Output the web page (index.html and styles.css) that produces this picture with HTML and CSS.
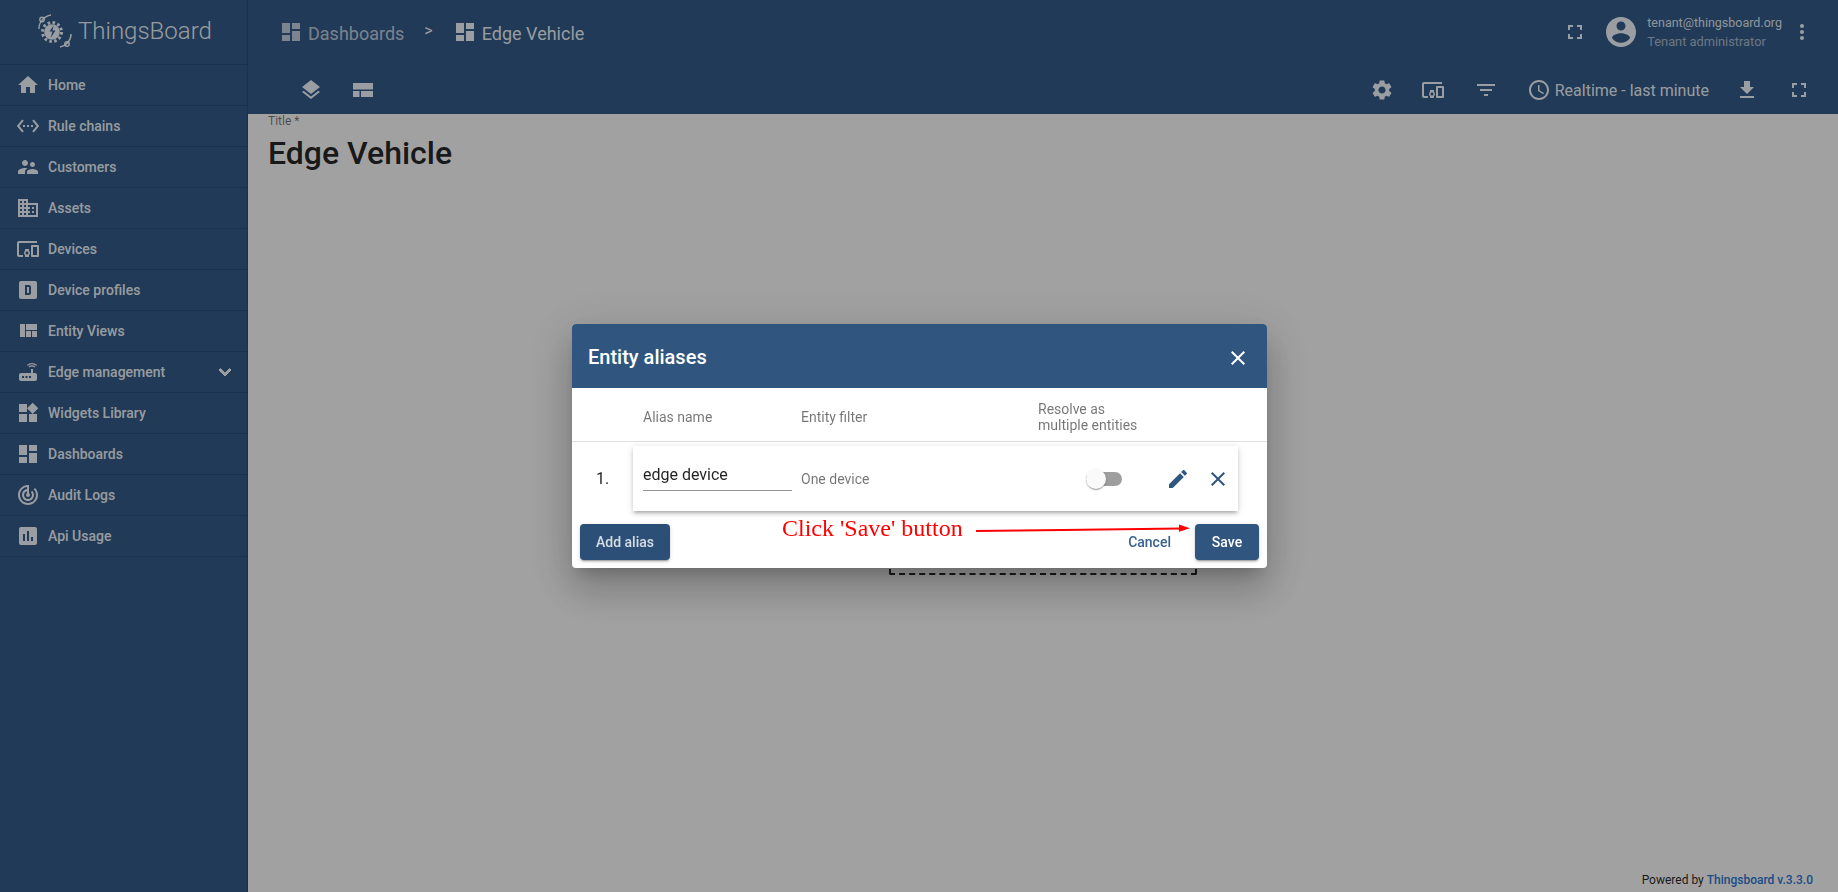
FILE: index.html
```html
<!DOCTYPE html>
<html lang="en">
<head>
<meta charset="utf-8">
<title>ThingsBoard</title>
<link rel="stylesheet" href="styles.css">
</head>
<body>
<svg class="defs" aria-hidden="true">
  <symbol id="i-home" viewBox="0 0 24 24"><path d="M10 20v-6h4v6h5v-8h3L12 3 2 12h3v8z"/></symbol>
  <symbol id="i-rule" viewBox="0 0 24 24"><path d="M7.77 6.76L6.23 5.48.82 12l5.41 6.52 1.54-1.28L3.42 12l4.35-5.24zM7 13h2v-2H7v2zm10-2h-2v2h2v-2zm-6 2h2v-2h-2v2zm6.77-7.52l-1.54 1.28L20.58 12l-4.35 5.24 1.54 1.28L23.18 12l-5.41-6.52z"/></symbol>
  <symbol id="i-customers" viewBox="0 0 24 24"><path d="M16.5 12c1.38 0 2.49-1.12 2.49-2.5S17.88 7 16.5 7C15.12 7 14 8.12 14 9.5s1.12 2.5 2.5 2.5zM9 11c1.66 0 2.99-1.34 2.99-3S10.66 5 9 5C7.34 5 6 6.34 6 8s1.34 3 3 3zm7.5 3c-1.83 0-5.5.92-5.5 2.75V19h11v-2.25c0-1.83-3.67-2.75-5.5-2.75zM9 13c-2.33 0-7 1.17-7 3.5V19h7v-2.25c0-.85.33-2.34 2.37-3.47C10.5 13.1 9.66 13 9 13z"/></symbol>
  <symbol id="i-domain" viewBox="0 0 24 24"><path d="M12 7V3H2v18h20V7H12zM6 19H4v-2h2v2zm0-4H4v-2h2v2zm0-4H4V9h2v2zm0-4H4V5h2v2zm4 12H8v-2h2v2zm0-4H8v-2h2v2zm0-4H8V9h2v2zm0-4H8V5h2v2zm10 12h-8v-2h2v-2h-2v-2h2v-2h-2V9h8v10zm-2-8h-2v2h2v-2zm0 4h-2v2h2v-2z"/></symbol>
  <symbol id="i-devices" viewBox="0 0 24 24"><path d="M3 6h18V4H3c-1.1 0-2 .9-2 2v12c0 1.1.9 2 2 2h4v-2H3V6zm10 6H9v1.78c-.61.55-1 1.33-1 2.22s.39 1.67 1 2.22V20h4v-1.78c.61-.55 1-1.34 1-2.22s-.39-1.67-1-2.22V12zm-2 5.5c-.83 0-1.5-.67-1.5-1.5s.67-1.5 1.5-1.5 1.5.67 1.5 1.5-.67 1.5-1.5 1.5zM22 8h-6c-.5 0-1 .5-1 1v10c0 .5.5 1 1 1h6c.5 0 1-.5 1-1V9c0-.5-.5-1-1-1zm-1 10h-4v-8h4v8z"/></symbol>
  <symbol id="i-profile" viewBox="0 0 24 24"><path fill-rule="evenodd" d="M5 3h14a2 2 0 0 1 2 2v14a2 2 0 0 1-2 2H5a2 2 0 0 1-2-2V5a2 2 0 0 1 2-2zm4 4v10h4a2 2 0 0 0 2-2V9a2 2 0 0 0-2-2H9zm2 2h2v6h-2V9z"/></symbol>
  <symbol id="i-quilt" viewBox="0 0 24 24"><path d="M10 18h5v-6h-5v6zm-6 0h5V5H4v13zm12 0h5v-6h-5v6zM10 5v6h11V5H10z"/></symbol>
  <symbol id="i-router" viewBox="0 0 24 24"><path d="M20.2 5.9l.8-.8C19.6 3.7 17.8 3 16 3s-3.6.7-5 2.1l.8.8C13 4.8 14.5 4.2 16 4.2s3 .6 4.2 1.7zm-.9.8c-.9-.9-2.1-1.4-3.3-1.4s-2.4.5-3.3 1.4l.8.8c.7-.7 1.6-1 2.5-1 .9 0 1.8.3 2.5 1l.8-.8zM19 13h-2V9h-2v4H5c-1.1 0-2 .9-2 2v4c0 1.1.9 2 2 2h14c1.1 0 2-.9 2-2v-4c0-1.1-.9-2-2-2zM8 18H6v-2h2v2zm3.5 0h-2v-2h2v2zm3.5 0h-2v-2h2v2z"/></symbol>
  <symbol id="i-widgets" viewBox="0 0 24 24"><path d="M13 13v8h8v-8h-8zM3 21h8v-8H3v8zM3 3v8h8V3H3zm13.66-1.31L11 7.34 16.66 13l5.66-5.66-5.66-5.65z"/></symbol>
  <symbol id="i-dashboard" viewBox="0 0 24 24"><path d="M3 13h8V3H3v10zm0 8h8v-6H3v6zm10 0h8V11h-8v10zm0-18v6h8V3h-8z"/></symbol>
  <symbol id="i-audit" viewBox="0 0 24 24"><path d="M19.07 4.93l-1.41 1.41C19.1 7.79 20 9.79 20 12c0 4.42-3.58 8-8 8s-8-3.58-8-8c0-4.08 3.05-7.44 7-7.93v2.02C8.16 6.57 6 9.03 6 12c0 3.31 2.69 6 6 6s6-2.69 6-6c0-1.66-.67-3.16-1.76-4.24l-1.41 1.41C15.55 9.9 16 10.9 16 12c0 2.21-1.79 4-4 4s-4-1.79-4-4c0-1.86 1.28-3.41 3-3.86v2.14c-.6.35-1 .98-1 1.72 0 1.1.9 2 2 2s2-.9 2-2c0-.74-.4-1.38-1-1.72V2h-1C6.48 2 2 6.48 2 12s4.48 10 10 10 10-4.48 10-10c0-2.76-1.12-5.26-2.93-7.07z"/></symbol>
  <symbol id="i-chart" viewBox="0 0 24 24"><path d="M19 3H5c-1.1 0-2 .9-2 2v14c0 1.1.9 2 2 2h14c1.1 0 2-.9 2-2V5c0-1.1-.9-2-2-2zM9 17H7v-7h2v7zm4 0h-2V7h2v10zm4 0h-2v-4h2v4z"/></symbol>
  <symbol id="i-expand" viewBox="0 0 24 24"><path d="M16.59 8.59L12 13.17 7.41 8.59 6 10l6 6 6-6z"/></symbol>
  <symbol id="i-layers" viewBox="0 0 24 24"><path d="M11.99 18.54l-7.37-5.73L3 14.07l9 7 9-7-1.63-1.27-7.38 5.74zM12 16l7.36-5.73L21 9l-9-7-9 7 1.63 1.27L12 16z"/></symbol>
  <symbol id="i-layout" viewBox="0 0 24 24"><path d="M2 5h20v6.5H2zM2 13h6.5v6H2zM10 13h12v6H10z"/></symbol>
  <symbol id="i-settings" viewBox="0 0 24 24"><path d="M19.14 12.94c.04-.3.06-.61.06-.94 0-.32-.02-.64-.07-.94l2.03-1.58c.18-.14.23-.41.12-.61l-1.92-3.32c-.12-.22-.37-.29-.59-.22l-2.39.96c-.5-.38-1.03-.7-1.62-.94l-.36-2.54c-.04-.24-.24-.41-.48-.41h-3.84c-.24 0-.43.17-.47.41l-.36 2.54c-.59.24-1.13.57-1.62.94l-2.39-.96c-.22-.08-.47 0-.59.22L2.74 8.87c-.12.21-.08.47.12.61l2.03 1.58c-.05.3-.09.63-.09.94s.02.64.07.94l-2.03 1.58c-.18.14-.23.41-.12.61l1.92 3.32c.12.22.37.29.59.22l2.39-.96c.5.38 1.03.7 1.62.94l.36 2.54c.05.24.24.41.48.41h3.84c.24 0 .44-.17.47-.41l.36-2.54c.59-.24 1.13-.56 1.62-.94l2.39.96c.22.08.47 0 .59-.22l1.92-3.32c.12-.22.07-.47-.12-.61l-2.01-1.58zM12 15.6c-1.98 0-3.6-1.62-3.6-3.6s1.62-3.6 3.6-3.6 3.6 1.62 3.6 3.6-1.62 3.6-3.6 3.6z"/></symbol>
  <symbol id="i-filter" viewBox="0 0 24 24"><path d="M10 18h4v-2h-4v2zM3 6v2h18V6H3zm3 7h12v-2H6v2z"/></symbol>
  <symbol id="i-clock" viewBox="0 0 24 24"><path d="M11.99 2C6.47 2 2 6.48 2 12s4.47 10 9.99 10C17.52 22 22 17.52 22 12S17.52 2 11.99 2zM12 20c-4.42 0-8-3.58-8-8s3.58-8 8-8 8 3.58 8 8-3.58 8-8 8zm.5-13H11v6l5.25 3.15.75-1.23-4.5-2.67z"/></symbol>
  <symbol id="i-download" viewBox="0 0 24 24"><path d="M19 9h-4V3H9v6H5l7 7 7-7zM5 18v2h14v-2H5z"/></symbol>
  <symbol id="i-fullscreen" viewBox="0 0 24 24"><path d="M7 14H5v5h5v-2H7v-3zm-2-4h2V7h3V5H5v5zm12 7h-3v2h5v-5h-2v3zM14 5v2h3v3h2V5h-5z"/></symbol>
  <symbol id="i-account" viewBox="0 0 24 24"><path d="M12 2C6.48 2 2 6.48 2 12s4.48 10 10 10 10-4.48 10-10S17.52 2 12 2zm0 3c1.66 0 3 1.34 3 3s-1.34 3-3 3-3-1.34-3-3 1.34-3 3-3zm0 14.2c-2.5 0-4.71-1.28-6-3.22.03-1.99 4-3.08 6-3.08 1.99 0 5.97 1.09 6 3.08-1.29 1.94-3.5 3.22-6 3.22z"/></symbol>
  <symbol id="i-more" viewBox="0 0 24 24"><path d="M12 8c1.1 0 2-.9 2-2s-.9-2-2-2-2 .9-2 2 .9 2 2 2zm0 2c-1.1 0-2 .9-2 2s.9 2 2 2 2-.9 2-2-.9-2-2-2zm0 6c-1.1 0-2 .9-2 2s.9 2 2 2 2-.9 2-2-.9-2-2-2z"/></symbol>
  <symbol id="i-edit" viewBox="0 0 24 24"><path d="M3 17.25V21h3.75L17.81 9.94l-3.75-3.75L3 17.25zM20.71 7.04c.39-.39.39-1.02 0-1.41l-2.34-2.34c-.39-.39-1.02-.39-1.41 0l-1.83 1.83 3.75 3.75 1.83-1.83z"/></symbol>
  <symbol id="i-close" viewBox="0 0 24 24"><path d="M19 6.41L17.59 5 12 10.59 6.41 5 5 6.41 10.59 12 5 17.59 6.41 19 12 13.41 17.59 19 19 17.59 13.41 12z"/></symbol>
</svg>

<div class="app">
  <aside class="sidebar">
    <div class="brand">
      <svg class="brand-mark" viewBox="0 0 36 36" aria-hidden="true">
        <circle class="gear-teeth" cx="15" cy="18" r="9.5"/>
        <circle class="gear-body" cx="15" cy="18" r="7.8"/>
        <path class="gear-bolt" d="M16.5 11.5l-4 6h3l-2 6.5 5-7.5h-3z"/>
        <path class="orbit" d="M2 15C1.5 9 7 2 14 1M23 33c6-1 11-6 11-13"/>
        <circle class="orbit" cx="5" cy="5.5" r="2.2"/>
        <circle class="orbit" cx="30" cy="30" r="2.2"/>
      </svg>
      <span class="brand-name">ThingsBoard</span>
    </div>
    <nav class="nav">
      <a class="nav-item"><svg class="icon"><use href="#i-home"/></svg><span>Home</span></a>
      <a class="nav-item"><svg class="icon"><use href="#i-rule"/></svg><span>Rule chains</span></a>
      <a class="nav-item"><svg class="icon"><use href="#i-customers"/></svg><span>Customers</span></a>
      <a class="nav-item"><svg class="icon"><use href="#i-domain"/></svg><span>Assets</span></a>
      <a class="nav-item"><svg class="icon"><use href="#i-devices"/></svg><span>Devices</span></a>
      <a class="nav-item"><svg class="icon"><use href="#i-profile"/></svg><span>Device profiles</span></a>
      <a class="nav-item"><svg class="icon"><use href="#i-quilt"/></svg><span>Entity Views</span></a>
      <a class="nav-item"><svg class="icon"><use href="#i-router"/></svg><span>Edge management</span><svg class="icon nav-chevron"><use href="#i-expand"/></svg></a>
      <a class="nav-item"><svg class="icon"><use href="#i-widgets"/></svg><span>Widgets Library</span></a>
      <a class="nav-item"><svg class="icon"><use href="#i-dashboard"/></svg><span>Dashboards</span></a>
      <a class="nav-item"><svg class="icon"><use href="#i-audit"/></svg><span>Audit Logs</span></a>
      <a class="nav-item"><svg class="icon"><use href="#i-chart"/></svg><span>Api Usage</span></a>
    </nav>
  </aside>

  <main class="main">
    <header class="toolbar">
      <div class="topbar">
        <div class="crumbs">
          <svg class="icon crumb-icon dim"><use href="#i-dashboard"/></svg>
          <span class="crumb dim">Dashboards</span>
          <span class="crumb-sep">&gt;</span>
          <svg class="icon crumb-icon"><use href="#i-dashboard"/></svg>
          <span class="crumb">Edge Vehicle</span>
        </div>
        <div class="user">
          <span class="icon-btn"><svg class="icon"><use href="#i-fullscreen"/></svg></span>
          <svg class="icon avatar"><use href="#i-account"/></svg>
          <div class="user-text">
            <div class="user-mail">tenant@thingsboard.org</div>
            <div class="user-role">Tenant administrator</div>
          </div>
          <span class="icon-btn user-more"><svg class="icon"><use href="#i-more"/></svg></span>
        </div>
      </div>
      <div class="actions">
        <div class="action-group">
          <span class="icon-btn"><svg class="icon"><use href="#i-layers"/></svg></span>
          <span class="icon-btn"><svg class="icon"><use href="#i-layout"/></svg></span>
        </div>
        <div class="action-group action-right">
          <span class="icon-btn act-settings"><svg class="icon"><use href="#i-settings"/></svg></span>
          <span class="icon-btn act-devices"><svg class="icon"><use href="#i-devices"/></svg></span>
          <span class="icon-btn"><svg class="icon"><use href="#i-filter"/></svg></span>
          <span class="timewindow"><svg class="icon"><use href="#i-clock"/></svg>Realtime - last minute</span>
          <span class="icon-btn"><svg class="icon"><use href="#i-download"/></svg></span>
          <span class="icon-btn"><svg class="icon"><use href="#i-fullscreen"/></svg></span>
        </div>
      </div>
    </header>
    <section class="content">
      <div class="title-label">Title *</div>
      <h1 class="title">Edge Vehicle</h1>
      <footer class="powered">Powered by <a class="powered-link">Thingsboard v.3.3.0</a></footer>
    </section>
  </main>
</div>

<div class="backdrop"></div>
<div class="dashed-mark"></div>

<div class="dialog-wrap">
  <div class="dialog">
    <div class="dialog-head">
      <h2 class="dialog-title">Entity aliases</h2>
      <svg class="icon dialog-close"><use href="#i-close"/></svg>
    </div>
    <div class="alias-head">
      <span class="col-name">Alias name</span>
      <span class="col-filter">Entity filter</span>
      <span class="col-resolve">Resolve as<br>multiple entities</span>
    </div>
    <div class="alias-body">
      <span class="alias-num">1.</span>
      <div class="alias-card">
        <div class="alias-input">edge device</div>
        <div class="alias-filter">One device</div>
        <div class="toggle"><span class="toggle-thumb"></span></div>
        <svg class="icon row-btn row-edit"><use href="#i-edit"/></svg>
        <svg class="icon row-btn row-close"><use href="#i-close"/></svg>
      </div>
    </div>
    <div class="dialog-foot">
      <button class="btn btn-add">Add alias</button>
      <span class="foot-gap"></span>
      <button class="btn btn-text">Cancel</button>
      <button class="btn btn-save">Save</button>
    </div>
    <div class="callout">Click 'Save' button</div>
    <svg class="callout-arrow" viewBox="0 0 220 12" aria-hidden="true">
      <path class="arrow-line" d="M0 8L205 5.5"/>
      <path class="arrow-head" d="M203 1.5L214 5.2 203 8.8z"/>
    </svg>
  </div>
</div>
</body>
</html>
```

FILE: styles.css
```css
* { box-sizing: border-box; }
html, body { margin: 0; height: 100%; }
body {
  font-family: Roboto, "Helvetica Neue", sans-serif;
  overflow: hidden;
  background: #eeeeee;
}
.defs { display: none; }
.icon { width: 24px; height: 24px; fill: currentColor; flex: none; display: block; }

.app { display: flex; height: 892px; }

/* Sidebar */
.sidebar {
  width: 248px;
  flex: none;
  background: #305680;
  color: rgba(255, 255, 255, 0.87);
  border-right: 1px solid rgba(0, 0, 0, 0.12);
}
.brand {
  height: 65px;
  display: flex;
  align-items: center;
  padding-left: 37px;
  gap: 5px;
  border-bottom: 1px solid rgba(0, 0, 0, 0.12);
}
.brand-mark { width: 36px; height: 36px; flex: none; }
.gear-teeth { fill: none; stroke: currentColor; stroke-width: 3; stroke-dasharray: 2.6 2.4; }
.gear-body { fill: currentColor; }
.gear-bolt { fill: #305680; }
.orbit { fill: none; stroke: currentColor; stroke-width: 1.4; }
.brand-name { font-size: 24px; font-weight: 300; line-height: 28px; margin-top: -2px; }
.nav { display: flex; flex-direction: column; }
.nav-item {
  height: 41px;
  display: flex;
  align-items: center;
  gap: 8px;
  padding: 0 10px 0 16px;
  font-size: 14px;
  font-weight: 500;
  border-bottom: 1px solid rgba(0, 0, 0, 0.12);
}
.nav-chevron { margin-left: auto; stroke: currentColor; stroke-width: 1; }

/* Main */
.main { flex: 1; min-width: 0; display: flex; flex-direction: column; }
.toolbar { height: 114px; flex: none; background: #305680; color: rgba(255, 255, 255, 0.87); }
.topbar { height: 64px; display: flex; align-items: center; justify-content: space-between; }
.crumbs { display: flex; align-items: center; padding-left: 31px; font-size: 18px; }
.crumb-icon { margin-right: 5px; }
.crumb { line-height: 24px; margin-top: 4px; }
.dim { opacity: 0.75; }
.crumb-sep { font-size: 16px; margin: -3px 20px 0 20px; }
.user { display: flex; align-items: center; }
.avatar { width: 36px; height: 36px; margin-left: 8px; }
.user-text { margin-left: 8px; line-height: 19px; }
.user-mail { font-size: 12.5px; color: rgba(255, 255, 255, 0.8); }
.user-role { font-size: 12.8px; color: rgba(255, 255, 255, 0.55); }
.icon-btn { width: 40px; height: 40px; display: flex; align-items: center; justify-content: center; flex: none; }
.user-more { margin: 0 16px 0 0; }
.actions { height: 50px; display: flex; align-items: flex-start; justify-content: space-between; padding: 6px 19px 0 43px; }
.action-group { display: flex; align-items: center; gap: 12px; }
.action-right { gap: 12px; }
.act-settings { margin-right: -1px; }
.act-devices { margin-right: 1px; }
.timewindow { display: flex; align-items: center; gap: 4px; font-size: 16px; margin: 0 6px 0 9px; }

.content { flex: 1; display: flex; flex-direction: column; padding: 0 0 0 20px; min-height: 0; }
.title-label { font-size: 12px; line-height: 14px; color: rgba(0, 0, 0, 0.54); }
.title { margin: 7px 0 0; font-size: 32px; font-weight: 500; line-height: 36px; color: rgba(0, 0, 0, 0.87); }
.powered { margin-top: auto; align-self: flex-end; padding: 0 25px 5px 0; font-size: 12px; line-height: 14px; color: rgba(0, 0, 0, 0.87); }
.powered-link { color: #2a72c4; font-weight: 500; }

/* Overlay */
.backdrop { position: fixed; inset: 0; background: rgba(0, 0, 0, 0.32); }
.dashed-mark {
  position: fixed;
  left: 889px;
  top: 540px;
  width: 308px;
  height: 35px;
  border: 2px dashed #1a1a1a;
  border-radius: 2px;
}
.dialog-wrap { position: fixed; inset: 0; display: flex; align-items: center; justify-content: center; padding-left: 1px; }
.dialog {
  position: relative;
  width: 695px;
  height: 244px;
  background: #ffffff;
  border-radius: 4px;
  box-shadow: 0 11px 15px -7px rgba(0, 0, 0, 0.2), 0 24px 38px 3px rgba(0, 0, 0, 0.14), 0 9px 46px 8px rgba(0, 0, 0, 0.12);
}
.dialog-head {
  height: 64px;
  background: #305680;
  color: #ffffff;
  border-radius: 4px 4px 0 0;
  display: flex;
  align-items: center;
  justify-content: space-between;
  padding: 0 17px 0 16px;
}
.dialog-title { margin: 0; font-size: 20px; font-weight: 500; line-height: 24px; margin-top: 1px; }
.dialog-close { margin-top: 3px; }

.alias-head {
  height: 54px;
  display: flex;
  align-items: flex-end;
  padding: 0 0 8px 71px;
  font-size: 14px;
  line-height: 16px;
  color: rgba(0, 0, 0, 0.54);
  border-bottom: 1px solid rgba(0, 0, 0, 0.12);
}
.col-name { width: 158px; margin-bottom: 8px; }
.col-filter { width: 237px; margin-bottom: 8px; }
.col-resolve { display: block; }

.alias-body { display: flex; align-items: center; padding: 4px 0 0 24px; }
.alias-num { width: 37px; font-size: 16px; color: rgba(0, 0, 0, 0.87); }
.alias-card {
  width: 605px;
  height: 65px;
  background: #ffffff;
  box-shadow: 0 3px 3px -2px rgba(0, 0, 0, 0.2), 0 3px 4px 0 rgba(0, 0, 0, 0.14), 0 1px 8px 0 rgba(0, 0, 0, 0.12);
  display: flex;
  align-items: center;
  padding-left: 10px;
}
.alias-input {
  width: 149px;
  height: 35px;
  align-self: flex-start;
  margin-top: 10px;
  padding-top: 9px;
  font-size: 16px;
  line-height: 20px;
  color: rgba(0, 0, 0, 0.87);
  border-bottom: 1px solid rgba(0, 0, 0, 0.42);
}
.alias-filter { width: 285px; margin-left: 9px; font-size: 14px; color: rgba(0, 0, 0, 0.54); }
.toggle { position: relative; width: 36px; height: 14px; border-radius: 7px; background: rgba(0, 0, 0, 0.38); }
.toggle-thumb {
  position: absolute;
  left: 0;
  top: -3px;
  width: 20px;
  height: 20px;
  border-radius: 50%;
  background: #fafafa;
  box-shadow: 0 2px 1px -1px rgba(0, 0, 0, 0.2), 0 1px 1px 0 rgba(0, 0, 0, 0.14), 0 1px 3px 0 rgba(0, 0, 0, 0.12);
}
.row-btn { color: #305680; }
.row-edit { margin-left: 44px; }
.row-close { margin-left: 16px; }

.dialog-foot { display: flex; align-items: center; padding: 13px 8px 0 8px; }
.foot-gap { flex: 1; }
.btn {
  height: 36px;
  border: 0;
  border-radius: 4px;
  font-family: inherit;
  font-size: 14px;
  font-weight: 500;
  padding: 0 16px;
}
.btn-add, .btn-save {
  background: #305680;
  box-shadow: 0 3px 1px -2px rgba(0, 0, 0, 0.2), 0 2px 2px 0 rgba(0, 0, 0, 0.14), 0 1px 5px 0 rgba(0, 0, 0, 0.12);
}
.btn-add { color: rgba(255, 255, 255, 0.8); background: #2c4f77; }
.btn-save { color: #ffffff; margin-left: 8px; min-width: 64px; }
.btn-text { background: transparent; color: #3a628f; }

.callout {
  position: absolute;
  left: 210px;
  top: 191px;
  font-family: "Liberation Serif", serif;
  font-size: 24px;
  line-height: 26px;
  color: #ff0000;
  white-space: nowrap;
}
.callout-arrow { position: absolute; left: 404px; top: 199px; width: 220px; height: 12px; overflow: visible; }
.arrow-line { stroke: #ff0000; stroke-width: 2; fill: none; }
.arrow-head { fill: #ff0000; }
```
